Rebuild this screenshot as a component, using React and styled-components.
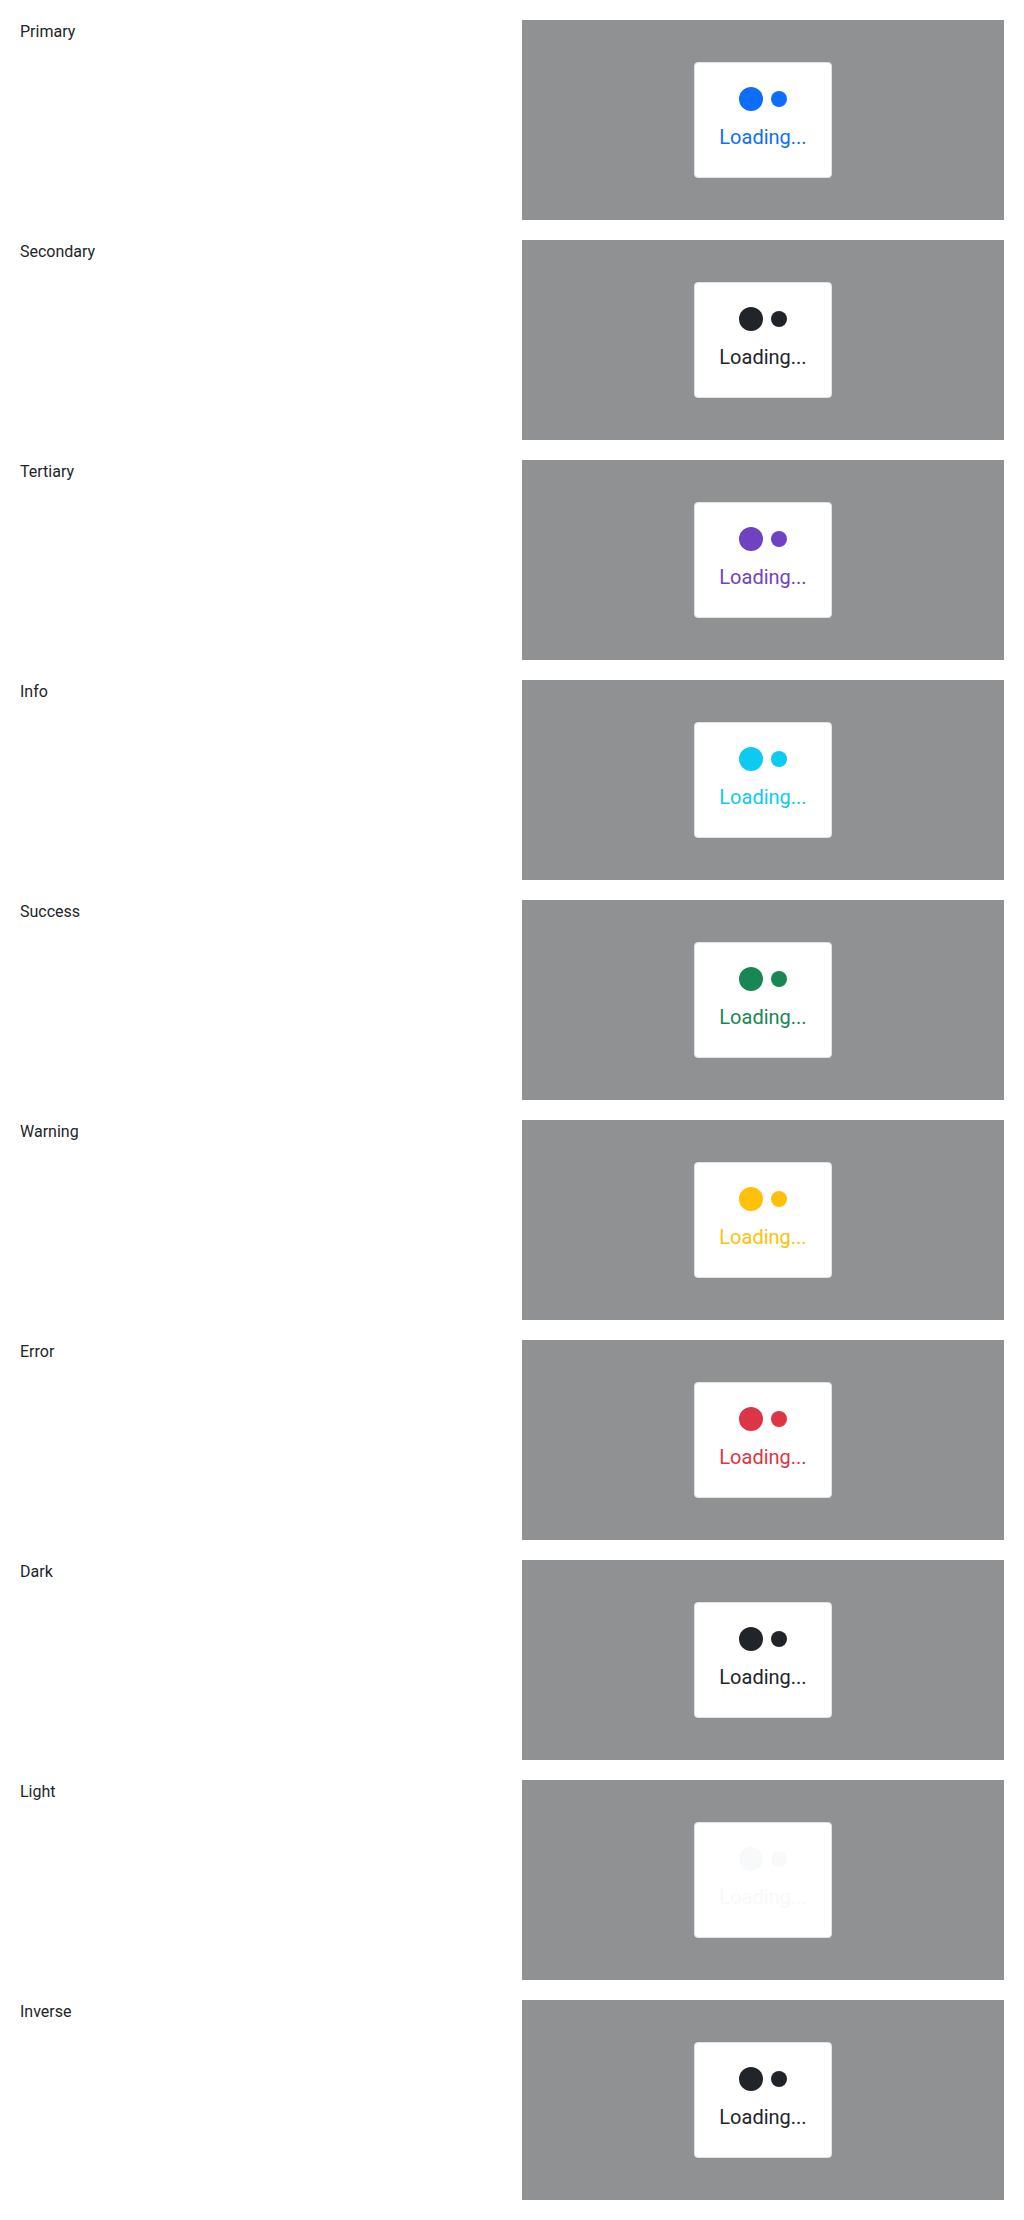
import React from "react";
import styled, { createGlobalStyle } from "styled-components";

const GlobalStyle = createGlobalStyle`
  * { box-sizing: border-box; }
  body {
    margin: 0;
    background: #fff;
    font-family: Roboto, "Liberation Sans", sans-serif;
    color: #212529;
  }
`;

const variants = [
  { label: "Primary", color: "#0d6efd" },
  { label: "Secondary", color: "#212529" },
  { label: "Tertiary", color: "#6f42c1" },
  { label: "Info", color: "#0dcaf0" },
  { label: "Success", color: "#198754" },
  { label: "Warning", color: "#ffc107" },
  { label: "Error", color: "#dc3545" },
  { label: "Dark", color: "#212529" },
  { label: "Light", color: "#f8f9fa" },
  { label: "Inverse", color: "#212529" },
];

const Page = styled.div`
  display: grid;
  grid-template-columns: 1fr 1fr;
  column-gap: 20px;
  row-gap: 20px;
  padding: 20px;
`;

const Label = styled.div`
  font-size: 16px;
  line-height: 24px;
  color: #212529;
`;

const Backdrop = styled.div`
  height: 200px;
  background: #909193;
  display: flex;
  align-items: center;
  justify-content: center;
`;

const Card = styled.div`
  background: #fff;
  border: 1px solid #dee2e6;
  border-radius: 4px;
  padding: 24px 24px 25px;
  display: flex;
  flex-direction: column;
  align-items: center;
  gap: 11px;
  color: ${(p) => p.$color};
`;

const Dots = styled.div`
  display: flex;
  align-items: center;
  gap: 8px;
  height: 24px;
`;

const Dot = styled.span`
  display: block;
  width: ${(p) => p.$size}px;
  height: ${(p) => p.$size}px;
  border-radius: 50%;
  background: currentColor;
`;

const Text = styled.div`
  font-size: 20px;
  line-height: 30px;
`;

const Spinner = ({ color }) => (
  <Card $color={color}>
    <Dots>
      <Dot $size={24} />
      <Dot $size={16} />
    </Dots>
    <Text>Loading...</Text>
  </Card>
);

export default function App() {
  return (
    <>
      <GlobalStyle />
      <Page>
        {variants.map((v) => (
          <React.Fragment key={v.label}>
            <Label>{v.label}</Label>
            <Backdrop>
              <Spinner color={v.color} />
            </Backdrop>
          </React.Fragment>
        ))}
      </Page>
    </>
  );
}
